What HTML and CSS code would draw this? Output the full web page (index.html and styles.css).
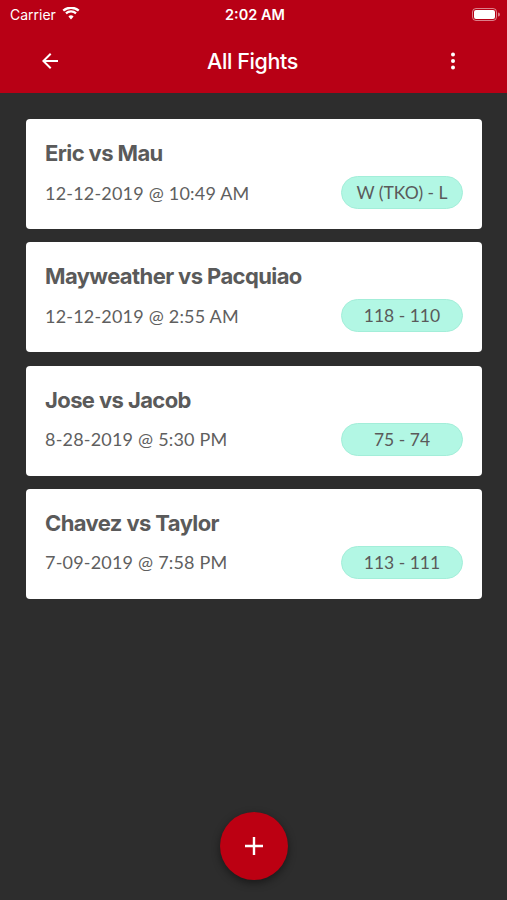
FILE: index.html
```html
<!DOCTYPE html>
<html>
<head>
<meta charset="utf-8">
<link rel="stylesheet" href="styles.css">
</head>
<body>
<div class="app">
  <header class="appbar">
    <div class="status">
      <div class="status-left">Carrier
        <svg class="wifi" width="18" height="13" viewBox="0 0 18 13"><path d="M9 12.5l2.6-3.1a4 4 0 0 0-5.2 0z M9 5.6a6.6 6.6 0 0 1 4.3 1.6l1.5-1.8A9 9 0 0 0 9 3.2a9 9 0 0 0-5.8 2.2l1.5 1.8A6.6 6.6 0 0 1 9 5.6z M9 1.9a10.7 10.7 0 0 1 7 2.6L17.5 2.7A13 13 0 0 0 9 -0.4a13 13 0 0 0-8.5 3.1L2 4.5a10.7 10.7 0 0 1 7-2.6z" fill="#fff"/></svg>
      </div>
      <div class="status-time">2:02 AM</div>
      <div class="status-right">
        <svg width="28" height="13" viewBox="0 0 28 13"><rect x="0.5" y="0.5" width="24" height="12" rx="3.5" fill="none" stroke="rgba(255,255,255,0.5)"/><rect x="2" y="2" width="21" height="9" rx="2" fill="#fff"/><path d="M26 4.5v4a2 2 0 0 0 0-4z" fill="rgba(255,255,255,0.5)"/></svg>
      </div>
    </div>
    <div class="toolbar">
      <svg class="icon" width="24" height="24" viewBox="0 0 24 24"><path d="M20 11H7.83l5.59-5.59L12 4l-8 8 8 8 1.41-1.41L7.83 13H20v-2z" fill="#fff"/></svg>
      <div class="title">All Fights</div>
      <svg class="icon" width="24" height="24" viewBox="0 0 24 24"><circle cx="12" cy="5.5" r="2" fill="#fff"/><circle cx="12" cy="12" r="2" fill="#fff"/><circle cx="12" cy="18.5" r="2" fill="#fff"/></svg>
    </div>
  </header>
  <main class="list">
    <div class="card">
      <div class="card-title">Eric vs Mau</div>
      <div class="card-row"><span class="date">12-12-2019 @ 10:49 AM</span><span class="pill">W (TKO) - L</span></div>
    </div>
    <div class="card">
      <div class="card-title">Mayweather vs Pacquiao</div>
      <div class="card-row"><span class="date">12-12-2019 @ 2:55 AM</span><span class="pill">118 - 110</span></div>
    </div>
    <div class="card">
      <div class="card-title">Jose vs Jacob</div>
      <div class="card-row"><span class="date">8-28-2019 @ 5:30 PM</span><span class="pill">75 - 74</span></div>
    </div>
    <div class="card">
      <div class="card-title">Chavez vs Taylor</div>
      <div class="card-row"><span class="date">7-09-2019 @ 7:58 PM</span><span class="pill">113 - 111</span></div>
    </div>
  </main>
  <button class="fab"><svg width="22" height="22" viewBox="0 0 22 22"><path d="M11 2v18M2 11h18" stroke="#fff" stroke-width="2.4"/></svg></button>
</div>
</body>
</html>
```

FILE: styles.css
```css
html, body {
  margin: 0;
  padding: 0;
  background: #2d2d2d;
  font-family: "Lato", "Inter", "Liberation Sans", sans-serif;
}
.app {
  width: 507px;
  height: 900px;
  position: relative;
  background: #2d2d2d;
  overflow: hidden;
}
.appbar {
  background: #b80015;
  color: #fff;
  height: 93px;
  display: flex;
  flex-direction: column;
}
.status {
  height: 28px;
  display: flex;
  align-items: center;
  justify-content: space-between;
  padding: 0 7px 0 10px;
  font-family: "Inter", "Liberation Sans", sans-serif;
  font-size: 14px;
}
.status-left {
  display: flex;
  align-items: center;
  gap: 6px;
  width: 120px;
  color: #fff;
}
.wifi { margin-top: -2px; }
.status-time {
  font-weight: 600;
  font-size: 14.5px;
}
.status-right {
  width: 120px;
  display: flex;
  justify-content: flex-end;
}
.toolbar {
  flex: 1;
  display: flex;
  align-items: center;
  justify-content: space-between;
  padding: 0 42px 0 38px;
}
.title {
  font-family: "Inter", "Liberation Sans", sans-serif;
  font-size: 21.5px;
  font-weight: 500;
  letter-spacing: -0.4px;
  margin-left: 2px;
}
.list {
  padding: 26px 25px 0 26px;
  display: flex;
  flex-direction: column;
  gap: 13.3px;
}
.card {
  background: #fff;
  border-radius: 4px;
  height: 110px;
  box-sizing: border-box;
  padding: 19px 19px 0 19px;
  display: flex;
  flex-direction: column;
}
.card-title {
  font-family: "Inter", "Liberation Sans", sans-serif;
  font-weight: 700;
  font-size: 22px;
  letter-spacing: -0.6px;
  color: #5a5a5a;
  line-height: 30px;
}
.card-row {
  margin-top: 8px;
  display: flex;
  align-items: center;
  justify-content: space-between;
}
.date {
  font-size: 18px;
  color: #5f5f5f;
  letter-spacing: 0.2px;
}
.pill {
  width: 122px;
  height: 33px;
  box-sizing: border-box;
  border-radius: 17px;
  background: #b2f7e4;
  border: 1px solid #a3eed9;
  color: #5a5a5a;
  font-size: 17.5px;
  display: flex;
  align-items: center;
  justify-content: center;
}
.fab {
  position: absolute;
  left: 220px;
  top: 812px;
  width: 68px;
  height: 68px;
  border-radius: 50%;
  border: none;
  background: #bc0012;
  box-shadow: 0 3px 8px rgba(0,0,0,0.45);
  display: flex;
  align-items: center;
  justify-content: center;
  padding: 0;
}
```
